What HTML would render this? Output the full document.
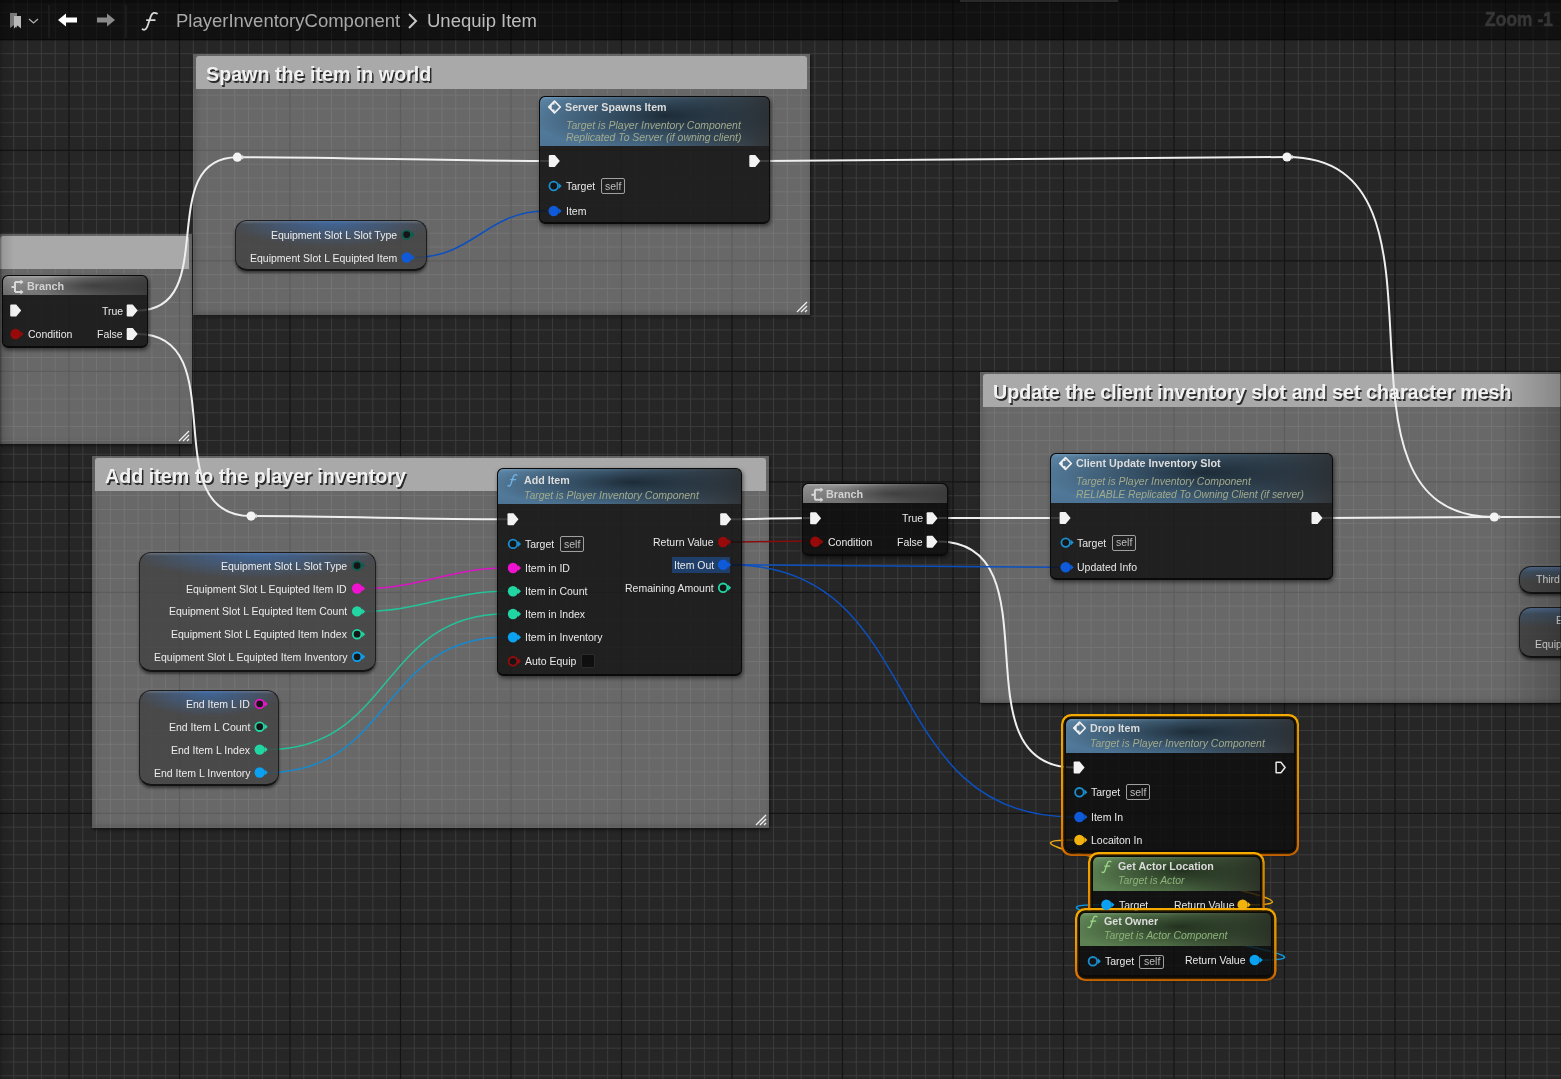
<!DOCTYPE html><html><head><meta charset="utf-8"><style>
html,body{margin:0;padding:0;}
body{width:1561px;height:1079px;overflow:hidden;position:relative;background:#262626;font-family:"Liberation Sans", sans-serif;}
.abs{position:absolute;}
.t{position:absolute;will-change:transform;white-space:nowrap;font-family:"Liberation Sans", sans-serif;}
.cm{position:absolute;background:rgba(196,196,196,0.42);box-shadow:1px 2px 3px rgba(0,0,0,0.5), inset 4px 0 5px rgba(0,0,0,0.08), inset 0 -3px 4px rgba(0,0,0,0.1);}
.cmt{position:absolute;background:#a9a9a9;border-radius:3px 3px 0 0;}
.nd{position:absolute;background:rgba(12,14,13,0.8);border:1px solid #0a0a0a;border-bottom-width:2px;box-sizing:border-box;box-shadow:1px 2px 4px rgba(0,0,0,0.55);overflow:hidden;}
.hd{position:absolute;left:0;top:0;right:0;}
.sel{position:absolute;background:linear-gradient(to bottom,#f6ab00,#ef9a00 50%,#e27400);}
.vn{position:absolute;border-radius:12px;background:radial-gradient(ellipse 55% 26px at 50% 0px, rgba(60,115,190,0.7), rgba(60,115,190,0) 100%),linear-gradient(to bottom,rgba(120,120,120,0.5) 0px,rgba(66,66,66,0.82) 3px,rgba(66,66,66,0.82) 100%);border:1px solid #1e1e1e;border-bottom:2px solid #141414;box-sizing:border-box;box-shadow:0px 2px 3px rgba(0,0,0,0.5);}
.sb{position:absolute;border:1.5px solid #a0a0a0;border-radius:2px;}
</style></head><body>
<svg class="abs" width="1561" height="1079" style="left:0;top:0"><path d="M-0.06 0V1079M13.75 0V1079M27.56 0V1079M41.38 0V1079M55.19 0V1079M82.81 0V1079M96.62 0V1079M110.44 0V1079M124.25 0V1079M138.06 0V1079M151.88 0V1079M165.69 0V1079M193.31 0V1079M207.12 0V1079M220.94 0V1079M234.75 0V1079M248.56 0V1079M262.38 0V1079M276.19 0V1079M303.81 0V1079M317.62 0V1079M331.44 0V1079M345.25 0V1079M359.06 0V1079M372.88 0V1079M386.69 0V1079M414.31 0V1079M428.12 0V1079M441.94 0V1079M455.75 0V1079M469.56 0V1079M483.38 0V1079M497.19 0V1079M524.81 0V1079M538.62 0V1079M552.44 0V1079M566.25 0V1079M580.06 0V1079M593.88 0V1079M607.69 0V1079M635.31 0V1079M649.12 0V1079M662.94 0V1079M676.75 0V1079M690.56 0V1079M704.38 0V1079M718.19 0V1079M745.81 0V1079M759.62 0V1079M773.44 0V1079M787.25 0V1079M801.06 0V1079M814.88 0V1079M828.69 0V1079M856.31 0V1079M870.12 0V1079M883.94 0V1079M897.75 0V1079M911.56 0V1079M925.38 0V1079M939.19 0V1079M966.81 0V1079M980.62 0V1079M994.44 0V1079M1008.25 0V1079M1022.06 0V1079M1035.88 0V1079M1049.69 0V1079M1077.31 0V1079M1091.12 0V1079M1104.94 0V1079M1118.75 0V1079M1132.56 0V1079M1146.38 0V1079M1160.19 0V1079M1187.81 0V1079M1201.62 0V1079M1215.44 0V1079M1229.25 0V1079M1243.06 0V1079M1256.88 0V1079M1270.69 0V1079M1298.31 0V1079M1312.12 0V1079M1325.94 0V1079M1339.75 0V1079M1353.56 0V1079M1367.38 0V1079M1381.19 0V1079M1408.81 0V1079M1422.62 0V1079M1436.44 0V1079M1450.25 0V1079M1464.06 0V1079M1477.88 0V1079M1491.69 0V1079M1519.31 0V1079M1533.12 0V1079M1546.94 0V1079M1560.75 0V1079M0 -1.59H1561M0 12.22H1561M0 26.04H1561M0 53.66H1561M0 67.47H1561M0 81.29H1561M0 95.10H1561M0 108.91H1561M0 122.72H1561M0 136.54H1561M0 164.16H1561M0 177.97H1561M0 191.79H1561M0 205.60H1561M0 219.41H1561M0 233.22H1561M0 247.04H1561M0 274.66H1561M0 288.47H1561M0 302.29H1561M0 316.10H1561M0 329.91H1561M0 343.72H1561M0 357.54H1561M0 385.16H1561M0 398.97H1561M0 412.79H1561M0 426.60H1561M0 440.41H1561M0 454.22H1561M0 468.04H1561M0 495.66H1561M0 509.47H1561M0 523.29H1561M0 537.10H1561M0 550.91H1561M0 564.72H1561M0 578.54H1561M0 606.16H1561M0 619.97H1561M0 633.79H1561M0 647.60H1561M0 661.41H1561M0 675.22H1561M0 689.04H1561M0 716.66H1561M0 730.47H1561M0 744.29H1561M0 758.10H1561M0 771.91H1561M0 785.72H1561M0 799.54H1561M0 827.16H1561M0 840.97H1561M0 854.79H1561M0 868.60H1561M0 882.41H1561M0 896.22H1561M0 910.04H1561M0 937.66H1561M0 951.47H1561M0 965.29H1561M0 979.10H1561M0 992.91H1561M0 1006.72H1561M0 1020.54H1561M0 1048.16H1561M0 1061.97H1561M0 1075.79H1561" stroke="#3c3c3c" stroke-width="1" fill="none"/><path d="M69.00 0V1079M179.50 0V1079M290.00 0V1079M400.50 0V1079M511.00 0V1079M621.50 0V1079M732.00 0V1079M842.50 0V1079M953.00 0V1079M1063.50 0V1079M1174.00 0V1079M1284.50 0V1079M1395.00 0V1079M1505.50 0V1079M0 39.85H1561M0 150.35H1561M0 260.85H1561M0 371.35H1561M0 481.85H1561M0 592.35H1561M0 702.85H1561M0 813.35H1561M0 923.85H1561M0 1034.35H1561" stroke="#141414" stroke-width="1.2" fill="none"/></svg>
<div class="cm" style="left:-3px;top:233.5px;width:195.3px;height:210.0px"></div>
<div class="cmt" style="left:0px;top:235.5px;width:189.3px;height:33px"></div>
<svg class="abs" width="12" height="12" style="left:178.3px;top:429.5px"><path d="M1 11L11 1M5 11L11 5M9 11L11 9" stroke="#f0f0f0" stroke-width="1.3" fill="none"/></svg>
<div class="cm" style="left:193px;top:54px;width:617px;height:261px"></div>
<div class="cmt" style="left:196px;top:56px;width:611px;height:33px"></div>
<div class="t" style="left:206.00px;top:64.82px;font-size:19.7px;line-height:19.7px;color:#f2f2f2;font-weight:bold;font-style:normal;text-shadow:1.5px 1.5px 0 rgba(20,20,20,0.85);">Spawn the item in world</div>
<svg class="abs" width="12" height="12" style="left:796px;top:301px"><path d="M1 11L11 1M5 11L11 5M9 11L11 9" stroke="#f0f0f0" stroke-width="1.3" fill="none"/></svg>
<div class="cm" style="left:92px;top:456px;width:677px;height:372px"></div>
<div class="cmt" style="left:95px;top:458px;width:671px;height:33px"></div>
<div class="t" style="left:105.00px;top:466.82px;font-size:19.7px;line-height:19.7px;color:#f2f2f2;font-weight:bold;font-style:normal;text-shadow:1.5px 1.5px 0 rgba(20,20,20,0.85);">Add item to the player inventory</div>
<svg class="abs" width="12" height="12" style="left:755px;top:814px"><path d="M1 11L11 1M5 11L11 5M9 11L11 9" stroke="#f0f0f0" stroke-width="1.3" fill="none"/></svg>
<div class="cm" style="left:980px;top:372px;width:595px;height:331px"></div>
<div class="cmt" style="left:983px;top:374px;width:589px;height:33px"></div>
<div class="t" style="left:993.00px;top:382.82px;font-size:19.7px;line-height:19.7px;color:#f2f2f2;font-weight:bold;font-style:normal;text-shadow:1.5px 1.5px 0 rgba(20,20,20,0.85);">Update the client inventory slot and set character mesh</div>
<svg class="abs" width="12" height="12" style="left:1561px;top:689px"><path d="M1 11L11 1M5 11L11 5M9 11L11 9" stroke="#f0f0f0" stroke-width="1.3" fill="none"/></svg>
<svg class="abs" width="1561" height="1079" style="left:0;top:0"><path d="M137.5 310.5C221.9 310.5 153.0 157.2 237.4 157.2" stroke="#efefef" stroke-width="2" fill="none"/><path d="M237.4 157.2C342.5 157.2 443.9 161 549 161" stroke="#efefef" stroke-width="2" fill="none"/><path d="M760 161C937.0 161 1110.0 157 1287 157" stroke="#efefef" stroke-width="2" fill="none"/><path d="M1287 157C1476.1 157 1305.2 517 1494.3 517" stroke="#efefef" stroke-width="2" fill="none"/><path d="M1494.3 517C1517.9 517 1541.4 517 1565 517" stroke="#efefef" stroke-width="2" fill="none"/><path d="M137.5 334C236.1 334 152.5 516.1 251.1 516.1" stroke="#efefef" stroke-width="2" fill="none"/><path d="M251.1 516.1C337.8 516.1 421.3 519.3 508 519.3" stroke="#efefef" stroke-width="2" fill="none"/><path d="M731 519.2C758.4 519.2 784.6 517.9 812 517.9" stroke="#efefef" stroke-width="2" fill="none"/><path d="M938.5 517.9C979.0 517.9 1019.5 517.9 1060 517.9" stroke="#efefef" stroke-width="2" fill="none"/><path d="M1322 517.9C1379.7 517.9 1436.6 517 1494.3 517" stroke="#efefef" stroke-width="2" fill="none"/><path d="M938.5 541.5C1059.0 541.5 953.5 767.5 1074 767.5" stroke="#efefef" stroke-width="2" fill="none"/><path d="M414 257.5C473.5 257.5 486.5 211 546 211" stroke="#0c50c0" stroke-width="1.5" fill="none"/><path d="M365 588.5C418.5 588.5 451.5 568 505 568" stroke="#d915c4" stroke-width="1.5" fill="none"/><path d="M365 611.4C418.4 611.4 451.6 591.3 505 591.3" stroke="#24c298" stroke-width="1.5" fill="none"/><path d="M268 749.6C392.2 749.6 380.8 614 505 614" stroke="#24c298" stroke-width="1.5" fill="none"/><path d="M268 772.5C392.1 772.5 380.9 637.2 505 637.2" stroke="#168ad0" stroke-width="1.5" fill="none"/><path d="M731 542C757.7 542 783.3 541 810 541" stroke="#8a0c0c" stroke-width="1.5" fill="none"/><path d="M731 564.8C841.2 564.8 948.8 567.3 1059 567.3" stroke="#0c50c0" stroke-width="1.5" fill="none"/><path d="M731 564.8C929.1 564.8 874.9 817 1073 817" stroke="#0c50c0" stroke-width="1.5" fill="none"/><path d="M1250 904.8C1372.0 904.8 951.0 840 1073 840" stroke="#e8a812" stroke-width="1.5" fill="none"/><path d="M1262 960C1382.0 960 979.0 904.8 1099 904.8" stroke="#0f96e0" stroke-width="1.5" fill="none"/><circle cx="237.4" cy="157.2" r="4.6" fill="#f4f4f4"/><path d="M241.9 154.7L244.9 157.2L241.9 159.7Z" fill="#dcdcdc"/><circle cx="1287" cy="157" r="4.6" fill="#f4f4f4"/><path d="M1291.5 154.5L1294.5 157L1291.5 159.5Z" fill="#dcdcdc"/><circle cx="251.1" cy="516.1" r="4.6" fill="#f4f4f4"/><path d="M255.6 513.6L258.6 516.1L255.6 518.6Z" fill="#dcdcdc"/><circle cx="1494.3" cy="517" r="4.6" fill="#f4f4f4"/><path d="M1498.8 514.5L1501.8 517L1498.8 519.5Z" fill="#dcdcdc"/></svg>
<div class="nd" style="left:2px;top:275.2px;width:146px;height:73.19999999999999px;border-radius:6px"><div class="hd" style="height:18.899999999999977px;background:radial-gradient(ellipse 50% 60% at 62% 50%, rgba(30,30,30,0.5), rgba(30,30,30,0) 100%),linear-gradient(to right, rgba(45,45,45,0) 0%, rgba(45,45,45,0) 30%, rgba(50,50,50,0.85) 100%),linear-gradient(to bottom, #a8a8a8 0px, #8e8e8e 2.5px, #808080 60%, #747474 100%);border-radius:5px 5px 0 0"></div></div>
<div class="t" style="left:26.50px;top:280.86px;font-size:10.8px;line-height:10.8px;color:#d2d2d2;font-weight:bold;font-style:normal;">Branch</div>
<div class="t" style="right:1438.00px;top:305.71px;font-size:10.5px;line-height:10.5px;color:#e8e8e8;font-weight:normal;font-style:normal;">True</div>
<div class="t" style="left:27.70px;top:328.81px;font-size:10.5px;line-height:10.5px;color:#e8e8e8;font-weight:normal;font-style:normal;">Condition</div>
<div class="t" style="right:1438.00px;top:329.01px;font-size:10.5px;line-height:10.5px;color:#e8e8e8;font-weight:normal;font-style:normal;">False</div>
<div class="vn" style="left:235.4px;top:220px;width:191.4px;height:51.19999999999999px"></div>
<div class="t" style="right:1164.20px;top:229.61px;font-size:10.5px;line-height:10.5px;color:#ececec;font-weight:normal;font-style:normal;">Equipment Slot L Slot Type</div>
<div class="t" style="right:1164.20px;top:252.51px;font-size:10.5px;line-height:10.5px;color:#ececec;font-weight:normal;font-style:normal;">Equipment Slot L Equipted Item</div>
<div class="nd" style="left:538.6px;top:95.9px;width:231.60000000000002px;height:128.29999999999998px;border-radius:6px"><div class="hd" style="height:49.599999999999994px;background:radial-gradient(ellipse 60% 75% at 55% 38%, rgba(18,28,36,0.82), rgba(18,28,36,0) 100%),linear-gradient(to right, rgba(30,30,30,0) 0%, rgba(30,30,30,0) 45%, rgba(48,50,52,0.95) 100%),linear-gradient(to bottom, #6d96b6 0px, #5b84a5 3px, #4d7494 100%);border-radius:5px 5px 0 0"></div></div>
<div class="t" style="left:565.00px;top:101.74px;font-size:10.7px;line-height:10.7px;color:#dcdcdc;font-weight:bold;font-style:normal;">Server Spawns Item</div>
<div class="t" style="left:565.50px;top:121.25px;font-size:10.45px;line-height:10.45px;color:#a2aa8c;font-weight:normal;font-style:italic;">Target is Player Inventory Component</div>
<div class="t" style="left:565.50px;top:133.15px;font-size:10.45px;line-height:10.45px;color:#a2aa8c;font-weight:normal;font-style:italic;">Replicated To Server (if owning client)</div>
<div class="t" style="left:566.20px;top:181.11px;font-size:10.5px;line-height:10.5px;color:#e8e8e8;font-weight:normal;font-style:normal;">Target</div>
<div class="sb" style="left:601px;top:178px;width:21.799999999999955px;height:14px"></div>
<div class="t" style="left:605.20px;top:180.51px;font-size:10.5px;line-height:10.5px;color:#bdbdbd;font-weight:normal;font-style:normal;">self</div>
<div class="t" style="left:566.20px;top:206.11px;font-size:10.5px;line-height:10.5px;color:#e8e8e8;font-weight:normal;font-style:normal;">Item</div>
<div class="vn" style="left:138.6px;top:551.6px;width:237.4px;height:120.29999999999995px"></div>
<div class="t" style="right:1214.10px;top:560.61px;font-size:10.5px;line-height:10.5px;color:#ececec;font-weight:normal;font-style:normal;">Equipment Slot L Slot Type</div>
<div class="t" style="right:1214.10px;top:583.51px;font-size:10.5px;line-height:10.5px;color:#ececec;font-weight:normal;font-style:normal;">Equipment Slot L Equipted Item ID</div>
<div class="t" style="right:1214.10px;top:606.41px;font-size:10.5px;line-height:10.5px;color:#ececec;font-weight:normal;font-style:normal;">Equipment Slot L Equipted Item Count</div>
<div class="t" style="right:1214.10px;top:629.21px;font-size:10.5px;line-height:10.5px;color:#ececec;font-weight:normal;font-style:normal;">Equipment Slot L Equipted Item Index</div>
<div class="t" style="right:1214.10px;top:651.81px;font-size:10.5px;line-height:10.5px;color:#ececec;font-weight:normal;font-style:normal;">Equipment Slot L Equipted Item Inventory</div>
<div class="vn" style="left:138.6px;top:689.6px;width:140.50000000000003px;height:96.79999999999995px"></div>
<div class="t" style="right:1311.00px;top:698.91px;font-size:10.5px;line-height:10.5px;color:#ececec;font-weight:normal;font-style:normal;">End Item L ID</div>
<div class="t" style="right:1311.00px;top:721.71px;font-size:10.5px;line-height:10.5px;color:#ececec;font-weight:normal;font-style:normal;">End Item L Count</div>
<div class="t" style="right:1311.00px;top:744.61px;font-size:10.5px;line-height:10.5px;color:#ececec;font-weight:normal;font-style:normal;">End Item L Index</div>
<div class="t" style="right:1311.00px;top:767.51px;font-size:10.5px;line-height:10.5px;color:#ececec;font-weight:normal;font-style:normal;">End Item L Inventory</div>
<div class="nd" style="left:497.2px;top:468.2px;width:244.50000000000006px;height:208.00000000000006px;border-radius:6px"><div class="hd" style="height:34.80000000000001px;background:radial-gradient(ellipse 60% 75% at 55% 38%, rgba(18,28,36,0.82), rgba(18,28,36,0) 100%),linear-gradient(to right, rgba(30,30,30,0) 0%, rgba(30,30,30,0) 45%, rgba(48,50,52,0.95) 100%),linear-gradient(to bottom, #6d96b6 0px, #5b84a5 3px, #4d7494 100%);border-radius:5px 5px 0 0"></div></div>
<div class="t" style="left:523.80px;top:475.44px;font-size:10.7px;line-height:10.7px;color:#dcdcdc;font-weight:bold;font-style:normal;">Add Item</div>
<div class="t" style="left:524.30px;top:490.55px;font-size:10.45px;line-height:10.45px;color:#a2aa8c;font-weight:normal;font-style:italic;">Target is Player Inventory Component</div>
<div class="t" style="left:524.70px;top:538.91px;font-size:10.5px;line-height:10.5px;color:#e8e8e8;font-weight:normal;font-style:normal;">Target</div>
<div class="t" style="left:524.70px;top:563.01px;font-size:10.5px;line-height:10.5px;color:#e8e8e8;font-weight:normal;font-style:normal;">Item in ID</div>
<div class="t" style="left:524.70px;top:586.31px;font-size:10.5px;line-height:10.5px;color:#e8e8e8;font-weight:normal;font-style:normal;">Item in Count</div>
<div class="t" style="left:524.70px;top:609.01px;font-size:10.5px;line-height:10.5px;color:#e8e8e8;font-weight:normal;font-style:normal;">Item in Index</div>
<div class="t" style="left:524.70px;top:632.21px;font-size:10.5px;line-height:10.5px;color:#e8e8e8;font-weight:normal;font-style:normal;">Item in Inventory</div>
<div class="t" style="left:524.70px;top:656.31px;font-size:10.5px;line-height:10.5px;color:#e8e8e8;font-weight:normal;font-style:normal;">Auto Equip</div>
<div class="sb" style="left:559.5px;top:536.2px;width:22.200000000000045px;height:14.0px"></div>
<div class="t" style="left:563.90px;top:538.71px;font-size:10.5px;line-height:10.5px;color:#bdbdbd;font-weight:normal;font-style:normal;">self</div>
<div class="abs" style="left:580.8px;top:653.9px;width:14.4px;height:14.6px;background:#0f0f0f;border:1px solid #2c2c2c;box-sizing:border-box;border-radius:2px"></div>
<div class="abs" style="left:672px;top:557px;width:58.4px;height:16px;background:#1f3f6a"></div>
<div class="t" style="right:847.00px;top:537.01px;font-size:10.5px;line-height:10.5px;color:#e8e8e8;font-weight:normal;font-style:normal;">Return Value</div>
<div class="t" style="right:847.00px;top:559.81px;font-size:10.5px;line-height:10.5px;color:#e8e8e8;font-weight:normal;font-style:normal;">Item Out</div>
<div class="t" style="right:847.00px;top:582.81px;font-size:10.5px;line-height:10.5px;color:#e8e8e8;font-weight:normal;font-style:normal;">Remaining Amount</div>
<div class="nd" style="left:801.9px;top:482.9px;width:146.0px;height:73.20000000000005px;border-radius:6px"><div class="hd" style="height:18.899999999999977px;background:radial-gradient(ellipse 50% 60% at 62% 50%, rgba(30,30,30,0.5), rgba(30,30,30,0) 100%),linear-gradient(to right, rgba(45,45,45,0) 0%, rgba(45,45,45,0) 30%, rgba(50,50,50,0.85) 100%),linear-gradient(to bottom, #a8a8a8 0px, #8e8e8e 2.5px, #808080 60%, #747474 100%);border-radius:5px 5px 0 0"></div></div>
<div class="t" style="left:826.40px;top:488.56px;font-size:10.8px;line-height:10.8px;color:#d2d2d2;font-weight:bold;font-style:normal;">Branch</div>
<div class="t" style="right:638.10px;top:513.41px;font-size:10.5px;line-height:10.5px;color:#e8e8e8;font-weight:normal;font-style:normal;">True</div>
<div class="t" style="left:827.60px;top:536.51px;font-size:10.5px;line-height:10.5px;color:#e8e8e8;font-weight:normal;font-style:normal;">Condition</div>
<div class="t" style="right:638.10px;top:536.71px;font-size:10.5px;line-height:10.5px;color:#e8e8e8;font-weight:normal;font-style:normal;">False</div>
<div class="nd" style="left:1049.7px;top:452.5px;width:282.89999999999986px;height:127.70000000000005px;border-radius:6px"><div class="hd" style="height:49.5px;background:radial-gradient(ellipse 60% 75% at 55% 38%, rgba(18,28,36,0.82), rgba(18,28,36,0) 100%),linear-gradient(to right, rgba(30,30,30,0) 0%, rgba(30,30,30,0) 45%, rgba(48,50,52,0.95) 100%),linear-gradient(to bottom, #6d96b6 0px, #5b84a5 3px, #4d7494 100%);border-radius:5px 5px 0 0"></div></div>
<div class="t" style="left:1075.90px;top:457.86px;font-size:10.8px;line-height:10.8px;color:#dcdcdc;font-weight:bold;font-style:normal;">Client Update Inventory Slot</div>
<div class="t" style="left:1076.00px;top:477.25px;font-size:10.45px;line-height:10.45px;color:#a2aa8c;font-weight:normal;font-style:italic;">Target is Player Inventory Component</div>
<div class="t" style="left:1076.00px;top:489.58px;font-size:10.3px;line-height:10.3px;color:#a2aa8c;font-weight:normal;font-style:italic;">RELIABLE Replicated To Owning Client (if server)</div>
<div class="t" style="left:1077.30px;top:537.51px;font-size:10.5px;line-height:10.5px;color:#e8e8e8;font-weight:normal;font-style:normal;">Target</div>
<div class="sb" style="left:1112px;top:534.6px;width:22px;height:14.199999999999932px"></div>
<div class="t" style="left:1116.30px;top:537.31px;font-size:10.5px;line-height:10.5px;color:#bdbdbd;font-weight:normal;font-style:normal;">self</div>
<div class="t" style="left:1077.30px;top:562.31px;font-size:10.5px;line-height:10.5px;color:#e8e8e8;font-weight:normal;font-style:normal;">Updated Info</div>
<div class="vn" style="left:1519.3px;top:565.8px;width:60px;height:28.2px;border-radius:12px;background:linear-gradient(to bottom,rgba(80,110,150,0.85) 0px,rgba(60,80,100,0.85) 5px,rgba(66,66,66,0.85) 14px)"></div>
<div class="t" style="left:1536.00px;top:574.41px;font-size:10.5px;line-height:10.5px;color:#e0e0e0;font-weight:normal;font-style:normal;">Third</div>
<div class="vn" style="left:1519.3px;top:606.7px;width:60px;height:51.6px;border-radius:12px;background:linear-gradient(to bottom,rgba(80,110,150,0.85) 0px,rgba(60,80,100,0.85) 6px,rgba(66,66,66,0.85) 20px)"></div>
<div class="t" style="left:1556.00px;top:615.11px;font-size:10.5px;line-height:10.5px;color:#e0e0e0;font-weight:normal;font-style:normal;">E</div>
<div class="t" style="left:1534.70px;top:639.11px;font-size:10.5px;line-height:10.5px;color:#e0e0e0;font-weight:normal;font-style:normal;">Equip</div>
<svg class="abs" width="240.0" height="144.0" style="left:1060.00px;top:713.00px"><defs><linearGradient id="og1065" x1="0" y1="0" x2="0" y2="1"><stop offset="0" stop-color="#f6ab00"/><stop offset="0.5" stop-color="#ef9a00"/><stop offset="1" stop-color="#e27400"/></linearGradient></defs><rect x="2.25" y="2.25" width="235.50" height="139.50" rx="9" fill="none" stroke="url(#og1065)" stroke-width="2.5"/><rect x="4.25" y="4.25" width="231.50" height="135.50" rx="7" fill="none" stroke="#241700" stroke-width="1.6"/></svg>
<div class="nd" style="left:1065px;top:718px;width:230px;height:134px;border-radius:6px"><div class="hd" style="height:33.700000000000045px;background:radial-gradient(ellipse 60% 75% at 55% 38%, rgba(18,28,36,0.82), rgba(18,28,36,0) 100%),linear-gradient(to right, rgba(30,30,30,0) 0%, rgba(30,30,30,0) 45%, rgba(48,50,52,0.95) 100%),linear-gradient(to bottom, #6d96b6 0px, #5b84a5 3px, #4d7494 100%);border-radius:5px 5px 0 0"></div></div>
<div class="t" style="left:1089.50px;top:723.24px;font-size:10.7px;line-height:10.7px;color:#dcdcdc;font-weight:bold;font-style:normal;">Drop Item</div>
<div class="t" style="left:1090.00px;top:739.35px;font-size:10.45px;line-height:10.45px;color:#a2aa8c;font-weight:normal;font-style:italic;">Target is Player Inventory Component</div>
<div class="t" style="left:1091.40px;top:787.31px;font-size:10.5px;line-height:10.5px;color:#e8e8e8;font-weight:normal;font-style:normal;">Target</div>
<div class="sb" style="left:1125.8px;top:784.3px;width:22.0px;height:14.200000000000045px"></div>
<div class="t" style="left:1130.10px;top:787.01px;font-size:10.5px;line-height:10.5px;color:#bdbdbd;font-weight:normal;font-style:normal;">self</div>
<div class="t" style="left:1091.40px;top:812.01px;font-size:10.5px;line-height:10.5px;color:#e8e8e8;font-weight:normal;font-style:normal;">Item In</div>
<div class="t" style="left:1091.40px;top:835.01px;font-size:10.5px;line-height:10.5px;color:#e8e8e8;font-weight:normal;font-style:normal;">Locaiton In</div>
<svg class="abs" width="178.7" height="69.6" style="left:1087.30px;top:851.40px"><defs><linearGradient id="og1092" x1="0" y1="0" x2="0" y2="1"><stop offset="0" stop-color="#f6ab00"/><stop offset="0.5" stop-color="#ef9a00"/><stop offset="1" stop-color="#e27400"/></linearGradient></defs><rect x="2.25" y="2.25" width="174.20" height="65.10" rx="9" fill="none" stroke="url(#og1092)" stroke-width="2.5"/><rect x="4.25" y="4.25" width="170.20" height="61.10" rx="7" fill="none" stroke="#241700" stroke-width="1.6"/></svg>
<div class="nd" style="left:1092.3px;top:856.4px;width:168.70000000000005px;height:59.60000000000002px;border-radius:6px"><div class="hd" style="height:33.30000000000007px;background:radial-gradient(ellipse 60% 75% at 52% 42%, rgba(20,30,18,0.8), rgba(20,30,18,0) 100%),linear-gradient(to right, rgba(30,30,30,0) 0%, rgba(30,30,30,0) 45%, rgba(40,44,36,0.9) 100%),linear-gradient(to bottom, #79a06f 0px, #668d5c 3px, #5b8051 100%);border-radius:5px 5px 0 0"></div></div>
<div class="t" style="left:1117.80px;top:860.84px;font-size:10.7px;line-height:10.7px;color:#dcdcdc;font-weight:bold;font-style:normal;">Get Actor Location</div>
<div class="t" style="left:1118.00px;top:876.15px;font-size:10.45px;line-height:10.45px;color:#8db27a;font-weight:normal;font-style:italic;">Target is Actor</div>
<div class="t" style="left:1119.10px;top:899.81px;font-size:10.5px;line-height:10.5px;color:#e8e8e8;font-weight:normal;font-style:normal;">Target</div>
<div class="t" style="right:326.80px;top:899.81px;font-size:10.5px;line-height:10.5px;color:#e8e8e8;font-weight:normal;font-style:normal;">Return Value</div>
<svg class="abs" width="203.5" height="75.0" style="left:1073.80px;top:906.50px"><defs><linearGradient id="og1078" x1="0" y1="0" x2="0" y2="1"><stop offset="0" stop-color="#f6ab00"/><stop offset="0.5" stop-color="#ef9a00"/><stop offset="1" stop-color="#e27400"/></linearGradient></defs><rect x="2.25" y="2.25" width="199.00" height="70.50" rx="9" fill="none" stroke="url(#og1078)" stroke-width="2.5"/><rect x="4.25" y="4.25" width="195.00" height="66.50" rx="7" fill="none" stroke="#241700" stroke-width="1.6"/></svg>
<div class="nd" style="left:1078.8px;top:911.5px;width:193.5px;height:65.0px;border-radius:6px"><div class="hd" style="height:33.299999999999955px;background:radial-gradient(ellipse 60% 75% at 52% 42%, rgba(20,30,18,0.8), rgba(20,30,18,0) 100%),linear-gradient(to right, rgba(30,30,30,0) 0%, rgba(30,30,30,0) 45%, rgba(40,44,36,0.9) 100%),linear-gradient(to bottom, #79a06f 0px, #668d5c 3px, #5b8051 100%);border-radius:5px 5px 0 0"></div></div>
<div class="t" style="left:1103.70px;top:915.94px;font-size:10.7px;line-height:10.7px;color:#dcdcdc;font-weight:bold;font-style:normal;">Get Owner</div>
<div class="t" style="left:1104.00px;top:931.35px;font-size:10.45px;line-height:10.45px;color:#8db27a;font-weight:normal;font-style:italic;">Target is Actor Component</div>
<div class="t" style="left:1105.00px;top:956.31px;font-size:10.5px;line-height:10.5px;color:#e8e8e8;font-weight:normal;font-style:normal;">Target</div>
<div class="sb" style="left:1139.3px;top:954.5px;width:22.5px;height:12.799999999999955px"></div>
<div class="t" style="left:1143.85px;top:955.81px;font-size:10.5px;line-height:10.5px;color:#bdbdbd;font-weight:normal;font-style:normal;">self</div>
<div class="t" style="right:315.70px;top:955.01px;font-size:10.5px;line-height:10.5px;color:#e8e8e8;font-weight:normal;font-style:normal;">Return Value</div>
<div class="abs" style="left:1505px;top:372px;width:56px;height:331px;background:linear-gradient(to right,rgba(0,0,0,0),rgba(0,0,0,0.2))"></div>
<svg class="abs" width="1561" height="1079" style="left:0;top:0"><path d="M11.5 287.0H15.0M15.0 282.0V292.0M15.0 282.0H21.5M15.0 292.0H21.5" stroke="#d8d8d8" stroke-width="2" fill="none"/><path d="M20.5 279.5L23.5 282.0L20.5 284.5Z M20.5 289.5L23.5 292.0L20.5 294.5Z" fill="#d8d8d8"/><path d="M11.2 304.5H16.2L21.2 310.5L16.2 316.5H11.2Q10.2 316.5 10.2 315.5V305.5Q10.2 304.5 11.2 304.5Z" fill="#f2f2f2"/><path d="M127.69999999999999 304.5H132.7L137.7 310.5L132.7 316.5H127.69999999999999Q126.69999999999999 316.5 126.69999999999999 315.5V305.5Q126.69999999999999 304.5 127.69999999999999 304.5Z" fill="#f2f2f2"/><circle cx="15.5" cy="334.0" r="5.2" fill="#980a0a"/><path d="M20.5 331.0L23.5 334.0L20.5 337.0Z" fill="#980a0a"/><path d="M127.69999999999999 328.0H132.7L137.7 334.0L132.7 340.0H127.69999999999999Q126.69999999999999 340.0 126.69999999999999 339.0V329.0Q126.69999999999999 328.0 127.69999999999999 328.0Z" fill="#f2f2f2"/><circle cx="406.7" cy="234.6" r="4.3" fill="#151515" stroke="#0b5e50" stroke-width="1.8"/><path d="M411.7 231.6L414.7 234.6L411.7 237.6Z" fill="#0b5e50"/><circle cx="406.7" cy="257.5" r="5.2" fill="#0e5ad8"/><path d="M411.7 254.5L414.7 257.5L411.7 260.5Z" fill="#0e5ad8"/><path d="M554.5 101.2L560.3 107L554.5 112.8L548.7 107Z" fill="none" stroke="#f0f0f0" stroke-width="1.7" stroke-linejoin="round"/><path d="M548.5 107L554.5 101V104.4H551.7V109.6H554.5V113Z" fill="#f0f0f0"/><path d="M549.8 155H554.8L559.8 161L554.8 167H549.8Q548.8 167 548.8 166V156Q548.8 155 549.8 155Z" fill="#f2f2f2"/><path d="M750.3 155H755.3L760.3 161L755.3 167H750.3Q749.3 167 749.3 166V156Q749.3 155 750.3 155Z" fill="#f2f2f2"/><circle cx="553.7" cy="186" r="4.3" fill="#151515" stroke="#1a8fd0" stroke-width="1.8"/><path d="M558.7 183L561.7 186L558.7 189Z" fill="#1a8fd0"/><circle cx="553.7" cy="211" r="5.2" fill="#0e5ad8"/><path d="M558.7 208L561.7 211L558.7 214Z" fill="#0e5ad8"/><circle cx="357.1" cy="565.6" r="4.3" fill="#151515" stroke="#0b5e50" stroke-width="1.8"/><path d="M362.1 562.6L365.1 565.6L362.1 568.6Z" fill="#0b5e50"/><circle cx="357.1" cy="588.5" r="5.2" fill="#f012d0"/><path d="M362.1 585.5L365.1 588.5L362.1 591.5Z" fill="#f012d0"/><circle cx="357.1" cy="611.4" r="5.2" fill="#21d6a3"/><path d="M362.1 608.4L365.1 611.4L362.1 614.4Z" fill="#21d6a3"/><circle cx="357.1" cy="634.2" r="4.3" fill="#151515" stroke="#21d6a3" stroke-width="1.8"/><path d="M362.1 631.2L365.1 634.2L362.1 637.2Z" fill="#21d6a3"/><circle cx="357.1" cy="656.8" r="4.3" fill="#151515" stroke="#0aa1f0" stroke-width="1.8"/><path d="M362.1 653.8L365.1 656.8L362.1 659.8Z" fill="#0aa1f0"/><circle cx="259.7" cy="703.9" r="4.3" fill="#151515" stroke="#f012d0" stroke-width="1.8"/><path d="M264.7 700.9L267.7 703.9L264.7 706.9Z" fill="#f012d0"/><circle cx="259.7" cy="726.7" r="4.3" fill="#151515" stroke="#21d6a3" stroke-width="1.8"/><path d="M264.7 723.7L267.7 726.7L264.7 729.7Z" fill="#21d6a3"/><circle cx="259.7" cy="749.6" r="5.2" fill="#21d6a3"/><path d="M264.7 746.6L267.7 749.6L264.7 752.6Z" fill="#21d6a3"/><circle cx="259.7" cy="772.5" r="5.2" fill="#0aa1f0"/><path d="M264.7 769.5L267.7 772.5L264.7 775.5Z" fill="#0aa1f0"/><path d="M508.00 485.66C509.62 486.74 510.88 485.30 511.60 481.94L513.22 476.90C514.12 474.50 515.65 474.26 517.00 475.22M510.70 479.54H515.65" stroke="#6fb4e8" stroke-width="1.3" fill="none" stroke-linecap="round"/><path d="M508.5 513.3H513.5L518.5 519.3L513.5 525.3H508.5Q507.5 525.3 507.5 524.3V514.3Q507.5 513.3 508.5 513.3Z" fill="#f2f2f2"/><path d="M721.2 513.2H726.2L731.2 519.2L726.2 525.2H721.2Q720.2 525.2 720.2 524.2V514.2Q720.2 513.2 721.2 513.2Z" fill="#f2f2f2"/><circle cx="513" cy="543.9" r="4.3" fill="#151515" stroke="#1a8fd0" stroke-width="1.8"/><path d="M518 540.9L521 543.9L518 546.9Z" fill="#1a8fd0"/><circle cx="513" cy="568" r="5.2" fill="#f012d0"/><path d="M518 565L521 568L518 571Z" fill="#f012d0"/><circle cx="513" cy="591.3" r="5.2" fill="#21d6a3"/><path d="M518 588.3L521 591.3L518 594.3Z" fill="#21d6a3"/><circle cx="513" cy="614" r="5.2" fill="#21d6a3"/><path d="M518 611L521 614L518 617Z" fill="#21d6a3"/><circle cx="513" cy="637.2" r="5.2" fill="#0aa1f0"/><path d="M518 634.2L521 637.2L518 640.2Z" fill="#0aa1f0"/><circle cx="513" cy="661.3" r="4.3" fill="#151515" stroke="#990b0b" stroke-width="1.8"/><path d="M518 658.3L521 661.3L518 664.3Z" fill="#990b0b"/><circle cx="723.1" cy="542" r="5.2" fill="#990b0b"/><path d="M728.1 539L731.1 542L728.1 545Z" fill="#990b0b"/><circle cx="723.1" cy="564.8" r="5.2" fill="#0e5ad8"/><path d="M728.1 561.8L731.1 564.8L728.1 567.8Z" fill="#0e5ad8"/><circle cx="723.1" cy="587.8" r="4.3" fill="#151515" stroke="#21d6a3" stroke-width="1.8"/><path d="M728.1 584.8L731.1 587.8L728.1 590.8Z" fill="#21d6a3"/><path d="M811.4 494.7H814.9M814.9 489.7V499.7M814.9 489.7H821.4M814.9 499.7H821.4" stroke="#d8d8d8" stroke-width="2" fill="none"/><path d="M820.4 487.2L823.4 489.7L820.4 492.2Z M820.4 497.2L823.4 499.7L820.4 502.2Z" fill="#d8d8d8"/><path d="M811.1 512.1999999999999H816.1L821.1 518.1999999999999L816.1 524.1999999999999H811.1Q810.1 524.1999999999999 810.1 523.1999999999999V513.1999999999999Q810.1 512.1999999999999 811.1 512.1999999999999Z" fill="#f2f2f2"/><path d="M927.5999999999999 512.1999999999999H932.5999999999999L937.5999999999999 518.1999999999999L932.5999999999999 524.1999999999999H927.5999999999999Q926.5999999999999 524.1999999999999 926.5999999999999 523.1999999999999V513.1999999999999Q926.5999999999999 512.1999999999999 927.5999999999999 512.1999999999999Z" fill="#f2f2f2"/><circle cx="815.4" cy="541.6999999999999" r="5.2" fill="#980a0a"/><path d="M820.4 538.6999999999999L823.4 541.6999999999999L820.4 544.6999999999999Z" fill="#980a0a"/><path d="M927.5999999999999 535.6999999999999H932.5999999999999L937.5999999999999 541.6999999999999L932.5999999999999 547.6999999999999H927.5999999999999Q926.5999999999999 547.6999999999999 926.5999999999999 546.6999999999999V536.6999999999999Q926.5999999999999 535.6999999999999 927.5999999999999 535.6999999999999Z" fill="#f2f2f2"/><path d="M1065.5 457.7L1071.3 463.5L1065.5 469.3L1059.7 463.5Z" fill="none" stroke="#f0f0f0" stroke-width="1.7" stroke-linejoin="round"/><path d="M1059.5 463.5L1065.5 457.5V460.9H1062.7V466.1H1065.5V469.5Z" fill="#f0f0f0"/><path d="M1060.6 511.9H1065.6L1070.6 517.9L1065.6 523.9H1060.6Q1059.6 523.9 1059.6 522.9V512.9Q1059.6 511.9 1060.6 511.9Z" fill="#f2f2f2"/><path d="M1312.5 511.9H1317.5L1322.5 517.9L1317.5 523.9H1312.5Q1311.5 523.9 1311.5 522.9V512.9Q1311.5 511.9 1312.5 511.9Z" fill="#f2f2f2"/><circle cx="1065.7" cy="542.6" r="4.3" fill="#151515" stroke="#1a8fd0" stroke-width="1.8"/><path d="M1070.7 539.6L1073.7 542.6L1070.7 545.6Z" fill="#1a8fd0"/><circle cx="1065.7" cy="567.3" r="5.2" fill="#0e5ad8"/><path d="M1070.7 564.3L1073.7 567.3L1070.7 570.3Z" fill="#0e5ad8"/><path d="M1079.5 722.2L1085.3 728L1079.5 733.8L1073.7 728Z" fill="none" stroke="#f0f0f0" stroke-width="1.7" stroke-linejoin="round"/><path d="M1073.5 728L1079.5 722V725.4H1076.7V730.6H1079.5V734Z" fill="#f0f0f0"/><path d="M1074.6 761.5H1079.6L1084.6 767.5L1079.6 773.5H1074.6Q1073.6 773.5 1073.6 772.5V762.5Q1073.6 761.5 1074.6 761.5Z" fill="#f2f2f2"/><path d="M1276.1000000000001 762.3H1280.9L1285.1000000000001 767.5L1280.9 772.7H1276.1000000000001V762.3Z" fill="none" stroke="#e8e8e8" stroke-width="1.5" stroke-linejoin="round"/><circle cx="1079.4" cy="792.3" r="4.3" fill="#151515" stroke="#1a8fd0" stroke-width="1.8"/><path d="M1084.4 789.3L1087.4 792.3L1084.4 795.3Z" fill="#1a8fd0"/><circle cx="1079.4" cy="817" r="5.2" fill="#0e5ad8"/><path d="M1084.4 814L1087.4 817L1084.4 820Z" fill="#0e5ad8"/><circle cx="1079.4" cy="840" r="5.2" fill="#f3b30f"/><path d="M1084.4 837L1087.4 840L1084.4 843Z" fill="#f3b30f"/><path d="M1102.00 872.16C1103.62 873.24 1104.88 871.80 1105.60 868.44L1107.22 863.40C1108.12 861.00 1109.65 860.76 1111.00 861.72M1104.70 866.04H1109.65" stroke="#9bd88a" stroke-width="1.3" fill="none" stroke-linecap="round"/><circle cx="1106.4" cy="904.8" r="5.2" fill="#0aa1f0"/><path d="M1111.4 901.8L1114.4 904.8L1111.4 907.8Z" fill="#0aa1f0"/><circle cx="1242.6" cy="904.8" r="5.2" fill="#f3b30f"/><path d="M1247.6 901.8L1250.6 904.8L1247.6 907.8Z" fill="#f3b30f"/><path d="M1088.00 927.16C1089.62 928.24 1090.88 926.80 1091.60 923.44L1093.22 918.40C1094.12 916.00 1095.65 915.76 1097.00 916.72M1090.70 921.04H1095.65" stroke="#9bd88a" stroke-width="1.3" fill="none" stroke-linecap="round"/><circle cx="1092.9" cy="961.3" r="4.3" fill="#151515" stroke="#1a8fd0" stroke-width="1.8"/><path d="M1097.9 958.3L1100.9 961.3L1097.9 964.3Z" fill="#1a8fd0"/><circle cx="1254.7" cy="960" r="5.2" fill="#0aa1f0"/><path d="M1259.7 957L1262.7 960L1259.7 963Z" fill="#0aa1f0"/></svg>
<div class="abs" style="left:0;top:0;width:1561px;height:40px;background:rgba(0,0,0,0.55)"></div>
<div class="abs" style="left:0;top:0;width:1561px;height:2.5px;background:rgba(0,0,0,0.25)"></div>
<div class="abs" style="left:960px;top:0;width:158px;height:2px;background:#2a2a2a"></div>
<div class="abs" style="left:47.5px;top:5px;width:2px;height:33px;background:#1c1c1c"></div>
<div class="abs" style="left:125px;top:5px;width:2px;height:33px;background:#1c1c1c"></div>
<svg class="abs" width="160" height="40" style="left:0;top:0">
<path d="M10 13H17V28L14 25L10 28Z" fill="#7a7a7a"/><path d="M14 16H21V28.5L17.5 25.5L14 28.5Z" fill="#b8b8b8"/>
<path d="M29 19L33.5 23L38 19" stroke="#b0b0b0" stroke-width="1.3" fill="none"/>
<path d="M58 20L66 13.5V17.5H77V22.5H66V26.5Z" fill="#ffffff"/>
<path d="M115 20L107 13.5V17.5H97V22.5H107V26.5Z" fill="#8a8a8a"/>
</svg>
<svg class="abs" width="170" height="40" style="left:0;top:0"><path d="M142.50 29.24C145.11 30.86 147.14 28.70 148.30 23.66L150.91 16.10C152.36 12.50 154.82 12.14 157.00 13.58M146.85 20.06H154.82" stroke="#d6d6d6" stroke-width="1.8" fill="none" stroke-linecap="round"/></svg>
<div class="t" style="left:176.30px;top:11.84px;font-size:18.5px;line-height:18.5px;color:#a8a8a8;font-weight:normal;font-style:normal;">PlayerInventoryComponent</div>
<svg class="abs" width="14" height="20" style="left:406px;top:11px"><path d="M3 3L10 10L3 17" stroke="#c8c8c8" stroke-width="2" fill="none"/></svg>
<div class="t" style="left:427.00px;top:11.84px;font-size:18.5px;line-height:18.5px;color:#bdbdbd;font-weight:normal;font-style:normal;">Unequip Item</div>
<div class="t" style="right:8.50px;top:9.29px;font-size:20.8px;line-height:20.8px;color:#373737;font-weight:bold;font-style:normal;transform:scaleX(0.84);transform-origin:100% 50%;-webkit-text-stroke:0.6px #373737;">Zoom -1</div>
<div class="abs" style="left:1559.5px;top:0;width:1.5px;height:1079px;background:rgba(0,0,0,0.35)"></div>
<div class="abs" style="left:0;top:0;width:14px;height:1079px;background:linear-gradient(to right,rgba(0,0,0,0.4),rgba(0,0,0,0.1) 2.5px,rgba(0,0,0,0))"></div>
</body></html>
